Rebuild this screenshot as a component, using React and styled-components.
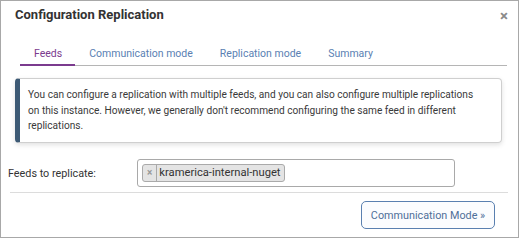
import React from "react";
import styled, { createGlobalStyle } from "styled-components";

const Global = createGlobalStyle`
  html, body { margin: 0; padding: 0; background: #fff; }
  * { box-sizing: border-box; }
  body { font-family: Roboto, "Liberation Sans", Arial, sans-serif; }
`;

const Dialog = styled.div`
  width: 519px;
  height: 238px;
  border: 1px solid #a8a8a8;
  background: #fff;
  display: flex;
  flex-direction: column;
`;

const Header = styled.div`
  display: flex;
  justify-content: space-between;
  align-items: flex-start;
  padding: 6px 10px 0 14px;
  height: 41px;
`;

const Title = styled.h1`
  margin: 0;
  font-size: 13px;
  line-height: 16px;
  font-weight: 700;
  color: #333;
`;

const Close = styled.span`
  font-size: 15px;
  line-height: 14px;
  font-weight: 700;
  color: #8a8a8a;
  margin-top: 2px;
`;

const Tabs = styled.div`
  display: flex;
  margin: 0 11px 0 19px;
  border-bottom: 1px solid #b5b5b5;
  height: 24px;
`;

const Tab = styled.div`
  padding: 0 13px 0 14px;
  font-size: 10.5px;
  line-height: 24px;
  color: ${(p) => (p.$active ? "#7b3b8e" : "#5a7fb3")};
  border-bottom: ${(p) => (p.$active ? "2px solid #7b3b8e" : "none")};
  margin-bottom: ${(p) => (p.$active ? "-1px" : "0")};
`;

const Alert = styled.div`
  margin: 12px 16px 0 14px;
  border: 1px solid #cfcfcf;
  border-left: 5px solid #3d5a75;
  border-radius: 4px;
  box-shadow: 0 2px 5px rgba(0, 0, 0, 0.12);
  padding: 8px 18px 6px 8px;
  font-size: 10.15px;
  line-height: 15.5px;
  color: #3a3a3a;
  height: 65px;
`;

const FormRow = styled.div`
  display: flex;
  align-items: center;
  margin: 16px 0 0 7px;
`;

const Label = styled.label`
  width: 129px;
  font-size: 10.8px;
  color: #333;
`;

const TagInput = styled.div`
  width: 318px;
  height: 28px;
  border: 1px solid #a9a9a9;
  border-radius: 3px;
  display: flex;
  align-items: center;
  padding-left: 4px;
`;

const Tag = styled.span`
  display: inline-flex;
  align-items: center;
  height: 18px;
  background: #e4e4e4;
  border: 1px solid #aaa;
  border-radius: 3px;
  font-size: 11.2px;
  color: #333;
`;

const TagRemove = styled.span`
  padding: 0 4px 0 4px;
  color: #999;
  font-size: 10px;
  font-weight: 700;
  border-right: 1px solid #aaa;
  line-height: 16px;
  margin-right: 2px;
`;

const TagText = styled.span`
  padding-right: 3px;
  line-height: 16px;
`;

const Separator = styled.hr`
  margin: 5px 10px 0 9px;
  border: 0;
  border-top: 1px solid #dcdcdc;
`;

const Footer = styled.div`
  display: flex;
  justify-content: flex-end;
  padding: 8px 23px 0 0;
`;

const Button = styled.button`
  width: 134px;
  height: 28px;
  border: 1px solid #5a80b0;
  border-radius: 5px;
  background: #fbfcfe;
  color: #4f6f99;
  font-family: Roboto, "Liberation Sans", Arial, sans-serif;
  font-size: 10.8px;
  padding: 0;
`;

export default function App() {
  return (
    <>
      <Global />
      <Dialog>
        <Header>
          <Title>Configuration Replication</Title>
          <Close>×</Close>
        </Header>
        <Tabs>
          <Tab $active>Feeds</Tab>
          <Tab>Communication mode</Tab>
          <Tab>Replication mode</Tab>
          <Tab>Summary</Tab>
        </Tabs>
        <Alert>
          You can configure a replication with multiple feeds, and you can also configure multiple replications
          on this instance. However, we generally don't recommend configuring the same feed in different
          replications.
        </Alert>
        <FormRow>
          <Label>Feeds to replicate:</Label>
          <TagInput>
            <Tag>
              <TagRemove>×</TagRemove>
              <TagText>kramerica-internal-nuget</TagText>
            </Tag>
          </TagInput>
        </FormRow>
        <Separator />
        <Footer>
          <Button>Communication Mode »</Button>
        </Footer>
      </Dialog>
    </>
  );
}
